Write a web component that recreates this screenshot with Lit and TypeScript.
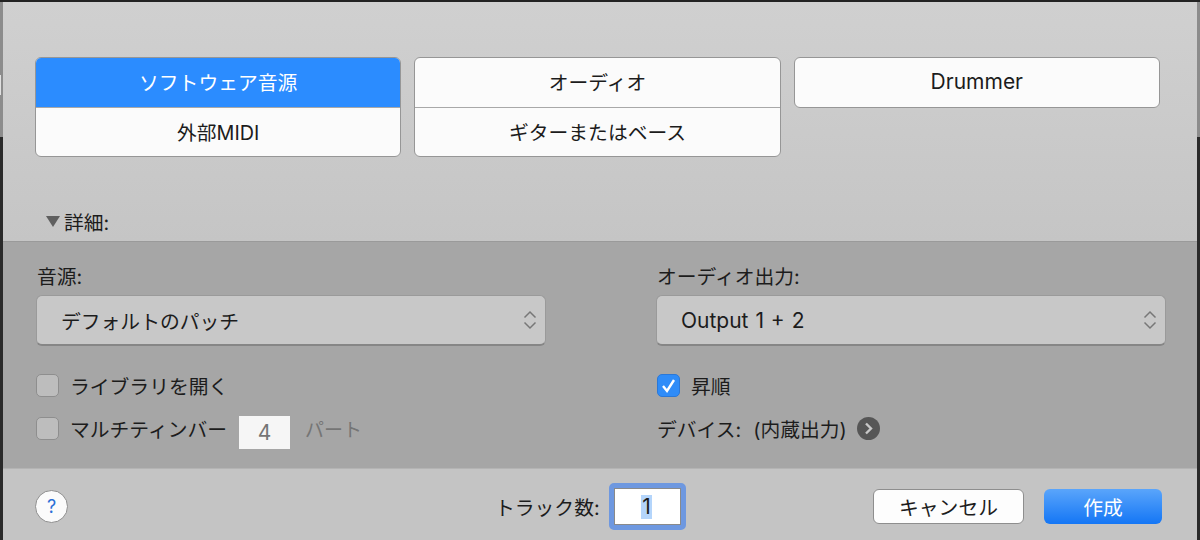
import { LitElement, html, css } from 'lit';
import { customElement } from 'lit/decorators.js';

const stepper = html`<svg class="stepper" width="14" height="24" viewBox="0 0 14 24" fill="none" stroke="#777" stroke-width="1.5">
  <path d="M1.5 9.5 7 4l5.500 5.500"/><path d="M1.500 14.500 7 20l5.500-5.500"/>
</svg>`;

@customElement('app-root')
export class AppRoot extends LitElement {
  static styles = css`
    :host {
      display: block;
      width: 1200px;
      height: 540px;
      overflow: hidden;
      background:
        linear-gradient(#e0e0e0, #e0e0e0) 0 75px / 1px 20px no-repeat,
        linear-gradient(#222 2px, #8c8c8c 2px, #8c8c8c 137px, #2a2a2a 137px);
      font-family: 'Inter', 'Noto Sans CJK JP', sans-serif;
      font-size: 19.8px;
      color: #1c1c1c;
    }
    .dialog {
      height: 538px;
      margin: 2px 3px 0 3px;
      display: flex;
      flex-direction: column;
    }
    .top {
      height: 239px;
      box-sizing: border-box;
      padding: 55px 37px 0 32px;
      background: linear-gradient(#d0d0d0, #c5c5c5);
      display: flex;
      flex-direction: column;
    }
    .types {
      display: flex;
      gap: 13px;
      align-items: flex-start;
    }
    .group {
      width: 367px;
      box-sizing: border-box;
      border: 1px solid #969696;
      border-radius: 6px;
      background: #fbfbfb;
      overflow: hidden;
    }
    .option {
      height: 49px;
      box-sizing: border-box;
      padding-bottom: 3px;
      display: flex;
      align-items: center;
      justify-content: center;
    }
    .option + .option {
      height: 49px;
      padding-bottom: 2px;
      border-top: 1px solid #a8a8a8;
    }
    .option.on {
      background: #2b8cff;
      color: #fff;
    }
    .latin {
      font-size: 21px;
    }
    .output {
      word-spacing: 1px;
    }
    .disclosure {
      margin-top: auto;
      margin-bottom: 5px;
      margin-left: 11px;
      height: 30px;
      display: flex;
      align-items: center;
      gap: 4px;
    }
    .tri {
      width: 0;
      height: 0;
      border-left: 7px solid transparent;
      border-right: 7px solid transparent;
      border-top: 11px solid #5f5f5f;
    }
    .details {
      height: 228px;
      box-sizing: border-box;
      border-top: 1px solid #9a9a9a;
      border-bottom: 1px solid #b4b4b4;
      background: #a6a6a6;
      padding: 22px 33px 0 33px;
      display: grid;
      grid-template-columns: 510px 510px;
      column-gap: 110px;
    }
    .col {
      display: flex;
      flex-direction: column;
    }
    .label {
      height: 26px;
      line-height: 26px;
      padding-left: 1px;
    }
    .select {
      margin-top: 5px;
      height: 51px;
      box-sizing: border-box;
      padding: 0 8px 0 24px;
      border: 1px solid #9a9a9a;
      border-bottom: 2px solid #868686;
      border-radius: 6px;
      background: #c8c8c8;
      display: flex;
      align-items: center;
      justify-content: space-between;
    }
    .row {
      height: 43px;
      display: flex;
      align-items: center;
    }
    .first {
      margin-top: 18px;
    }
    .check {
      width: 23px;
      height: 23px;
      box-sizing: border-box;
      border: 1px solid #8e8e8e;
      border-radius: 5px;
      background: #bdbdbd;
      margin-right: 11px;
      flex: none;
    }
    .right .check {
      margin-left: 1px;
    }
    .check.on {
      background: #2f8cf8;
      border-color: #2a78d8;
      display: flex;
      align-items: center;
      justify-content: center;
    }
    .count {
      width: 51px;
      height: 33px;
      margin-left: 12px;
      margin-top: 8px;
      background: #f6f6f6;
      color: #757575;
      display: flex;
      align-items: center;
      justify-content: center;
      font-size: 21px;
    }
    .unit {
      margin-left: 15px;
      color: #757575;
      font-size: 19px;
    }
    .device {
      padding-left: 1px;
    }
    .device span {
      margin-left: 12px;
    }
    .go {
      width: 23px;
      height: 23px;
      margin-left: 10px;
    }
    .footer {
      flex: 1;
      background: #c4c4c4;
      padding: 4px 35px 0 32px;
      display: flex;
      align-items: center;
    }
    .help {
      width: 33px;
      height: 33px;
      box-sizing: border-box;
      border: 1px solid #8e8e8e;
      border-radius: 50%;
      background: #fbfbfb;
      color: #2b6fd6;
      display: flex;
      align-items: center;
      justify-content: center;
      font-size: 18px;
    }
    .tracks {
      margin-left: 427px;
      display: flex;
      align-items: center;
      gap: 9px;
    }
    .field {
      width: 77px;
      height: 47px;
      box-sizing: border-box;
      border: 5px solid #6e98e0;
      border-radius: 5px;
      background: #fff;
      box-shadow: inset 0 0 0 1px #8a8a8a;
      display: flex;
      align-items: center;
      justify-content: center;
      font-size: 21px;
    }
    .field span {
      background: #b4d5fb;
      line-height: 24px;
      padding: 0 1px;
      margin-right: 1px;
    }
    .btn {
      height: 35px;
      box-sizing: border-box;
      border-radius: 6px;
      display: flex;
      align-items: center;
      justify-content: center;
    }
    .cancel {
      margin-left: auto;
      width: 151px;
      border: 1px solid #8e8e8e;
      background: #fdfdfd;
    }
    .ok {
      margin-left: 20px;
      width: 118px;
      color: #fff;
      background: linear-gradient(#5aa5fb, #1476f5);
    }
  `;

  render() {
    return html`
      <div class="dialog">
        <div class="top">
          <div class="types">
            <div class="group">
              <div class="option on">ソフトウェア音源</div>
              <div class="option">外部MIDI</div>
            </div>
            <div class="group">
              <div class="option">オーディオ</div>
              <div class="option">ギターまたはベース</div>
            </div>
            <div class="group">
              <div class="option latin">Drummer</div>
            </div>
          </div>
          <div class="disclosure"><span class="tri"></span>詳細:</div>
        </div>
        <div class="details">
          <div class="col">
            <div class="label">音源:</div>
            <div class="select">デフォルトのパッチ ${stepper}</div>
            <div class="row first"><span class="check"></span>ライブラリを開く</div>
            <div class="row">
              <span class="check"></span>マルチティンバー
              <span class="count">4</span><span class="unit">パート</span>
            </div>
          </div>
          <div class="col right">
            <div class="label">オーディオ出力:</div>
            <div class="select"><span class="latin output">Output 1 + 2</span> ${stepper}</div>
            <div class="row first">
              <span class="check on">
                <svg width="17" height="17" viewBox="0 0 17 17" fill="none" stroke="#fff" stroke-width="2.4"><path d="M3 9l4 5 7-11"/></svg>
              </span>昇順
            </div>
            <div class="row device">
              デバイス:<span>(内蔵出力)</span>
              <svg class="go" viewBox="0 0 23 23"><circle cx="11.500" cy="11.500" r="11.500" fill="#565656"/><path d="M9 6.500l5 5-5 5" fill="none" stroke="#c8c8c8" stroke-width="2.400"/></svg>
            </div>
          </div>
        </div>
        <div class="footer">
          <div class="help">?</div>
          <div class="tracks">トラック数:<div class="field"><span>1</span></div></div>
          <div class="btn cancel">キャンセル</div>
          <div class="btn ok">作成</div>
        </div>
      </div>
    `;
  }
}
